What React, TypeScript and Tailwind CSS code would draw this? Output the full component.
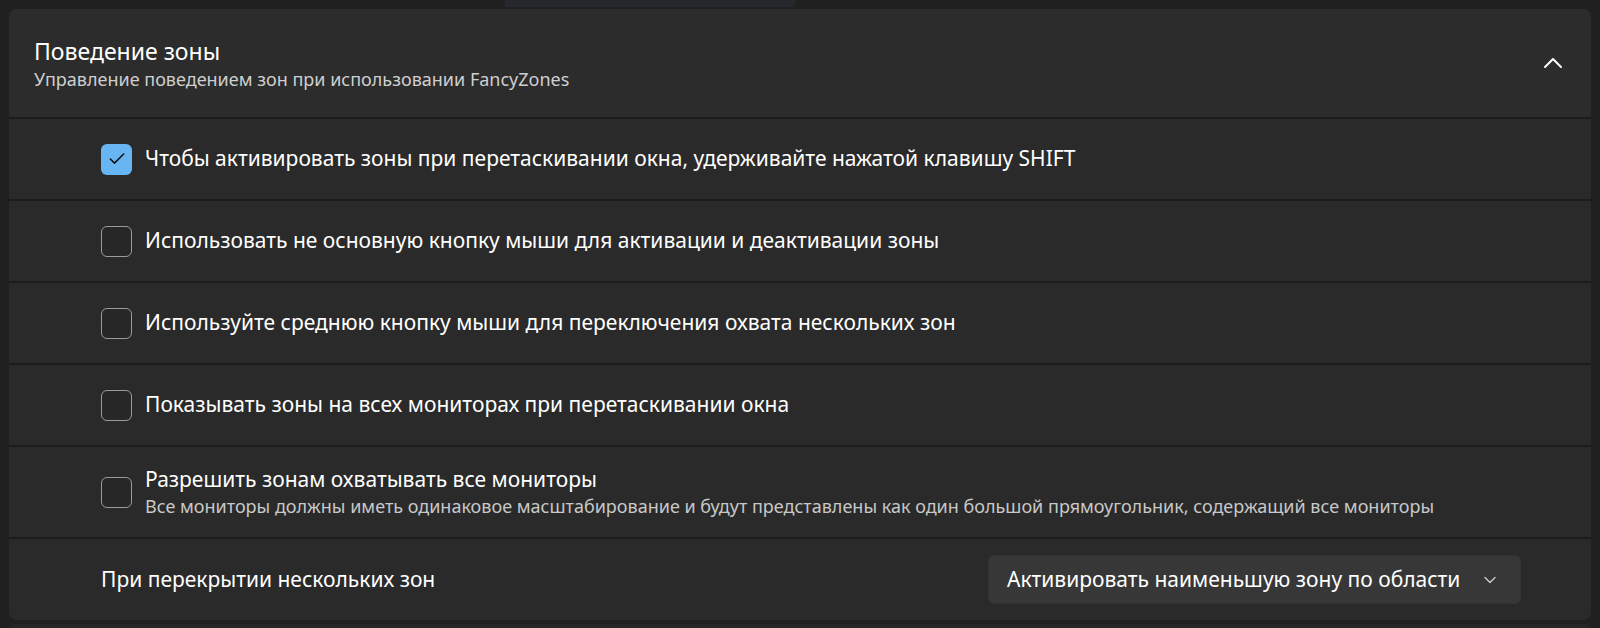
import { ChevronDown, ChevronUp, Check } from "lucide-react";

const font = { fontFamily: '"Noto Sans", "Open Sans", sans-serif' };

const rows = [
  {
    label: "Чтобы активировать зоны при перетаскивании окна, удерживайте нажатой клавишу SHIFT",
    checked: true,
  },
  { label: "Использовать не основную кнопку мыши для активации и деактивации зоны" },
  { label: "Используйте среднюю кнопку мыши для переключения охвата нескольких зон" },
  { label: "Показывать зоны на всех мониторах при перетаскивании окна" },
];

function CheckBox({ checked }: { checked?: boolean }) {
  if (checked) {
    return (
      <span className="flex h-[31px] w-[31px] shrink-0 items-center justify-center rounded-[6px] bg-[#67b5f2]">
        <Check className="h-[20px] w-[20px] text-[#141414]" strokeWidth={1.9} />
      </span>
    );
  }
  return (
    <span className="h-[31px] w-[31px] shrink-0 rounded-[6px] border-[1.5px] border-[#9b9b9b] bg-[#272727]" />
  );
}

export default function App() {
  return (
    <div className="h-[628px] w-[1600px] overflow-hidden bg-[#202020]" style={font}>
      <div className="h-[9px]">
        <div className="ml-[505px] h-[7px] w-[290px] bg-[#25282c]" />
      </div>
      <div className="mx-[9px] flex flex-col gap-[2px] overflow-hidden rounded-[7px] bg-[#1c1c1c]">
        <div className="flex h-[108px] items-center justify-between bg-[#2c2c2c] pl-[25px] pr-[22px]">
          <div className="flex flex-col pt-[2px]">
            <span className="text-[23px] leading-[29px] text-white">Поведение зоны</span>
            <span className="text-[18px] leading-[26px] text-[#cfcfcf]">
              Управление поведением зон при использовании FancyZones
            </span>
          </div>
          <ChevronUp className="h-[32px] w-[32px] text-white" strokeWidth={1.5} />
        </div>

        {rows.map((row) => (
          <div key={row.label} className="flex h-[80px] items-center gap-[13px] bg-[#2a2a2a] pl-[92px]">
            <CheckBox checked={row.checked} />
            <span className="text-[21px] text-white">{row.label}</span>
          </div>
        ))}

        <div className="flex h-[90px] items-center gap-[13px] bg-[#2a2a2a] pl-[92px]">
          <CheckBox />
          <div className="flex flex-col">
            <span className="text-[21px] leading-[28px] text-white">
              Разрешить зонам охватывать все мониторы
            </span>
            <span className="text-[18px] leading-[26px] text-[#c8c8c8]">
              Все мониторы должны иметь одинаковое масштабирование и будут представлены как один большой прямоугольник, содержащий все мониторы
            </span>
          </div>
        </div>

        <div className="flex h-[81px] items-center justify-between bg-[#2a2a2a] pl-[92px] pr-[70px]">
          <span className="text-[21px] text-white">При перекрытии нескольких зон</span>
          <div className="flex h-[49px] w-[533px] items-center justify-between rounded-[6px] border border-[#333333] bg-[#373737] pl-[18px] pr-[20px]">
            <span className="text-[21px] text-white">Активировать наименьшую зону по области</span>
            <ChevronDown className="h-[20px] w-[20px] text-[#d0d0d0]" strokeWidth={1.5} />
          </div>
        </div>
      </div>
      <div className="mx-[9px] mt-[4px] h-[8px] rounded-t-[7px] bg-[#262626]" />
    </div>
  );
}
